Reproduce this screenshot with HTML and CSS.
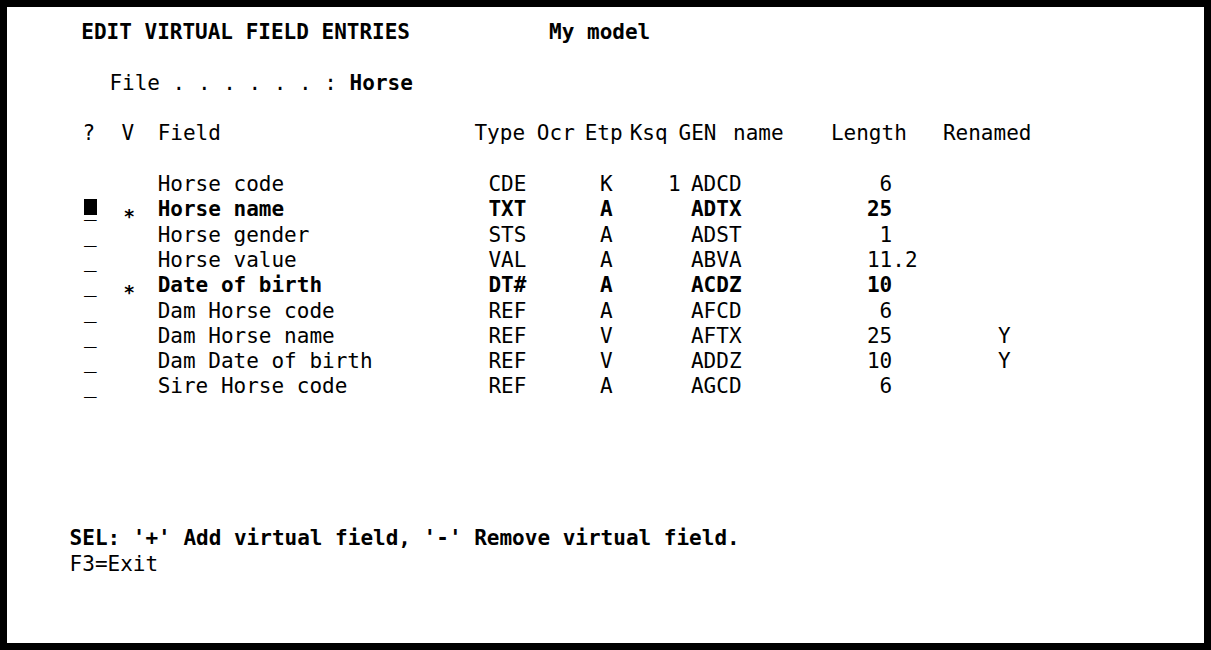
FILE: index.html
```html
<!DOCTYPE html>
<html lang="en">
<head>
<meta charset="utf-8">
<title>Edit virtual field entries</title>
<link rel="stylesheet" href="styles.css">
</head>
<body>
<div class="screen">
  <div class="line title">EDIT VIRTUAL FIELD ENTRIES           My model</div>
  <div class="line file">File . . . . . . : <b class="b">Horse</b></div>
  <div class="hdr">
    <span>?</span><span>V</span><span>Field</span><span>Type</span><span>Ocr</span><span>Etp</span><span>Ksq</span><span>GEN</span><span>name</span><span>Length</span><span>Renamed</span>
  </div>
  <div class="rows">
    <div class="row"><span class="sel"></span><span></span><span>Horse code</span><span>CDE</span><span>K</span><span>1</span><span>ADCD</span><span> 6</span><span></span></div>
    <div class="row bold"><span class="sel"><span class="cur">_</span></span><span><span class="star">*</span></span><span>Horse name</span><span>TXT</span><span>A</span><span></span><span>ADTX</span><span>25</span><span></span></div>
    <div class="row"><span class="sel">_</span><span></span><span>Horse gender</span><span>STS</span><span>A</span><span></span><span>ADST</span><span> 1</span><span></span></div>
    <div class="row"><span class="sel">_</span><span></span><span>Horse value</span><span>VAL</span><span>A</span><span></span><span>ABVA</span><span>11.2</span><span></span></div>
    <div class="row bold"><span class="sel">_</span><span><span class="star">*</span></span><span>Date of birth</span><span>DT#</span><span>A</span><span></span><span>ACDZ</span><span>10</span><span></span></div>
    <div class="row"><span class="sel">_</span><span></span><span>Dam Horse code</span><span>REF</span><span>A</span><span></span><span>AFCD</span><span> 6</span><span></span></div>
    <div class="row"><span class="sel">_</span><span></span><span>Dam Horse name</span><span>REF</span><span>V</span><span></span><span>AFTX</span><span>25</span><span>Y</span></div>
    <div class="row"><span class="sel">_</span><span></span><span>Dam Date of birth</span><span>REF</span><span>V</span><span></span><span>ADDZ</span><span>10</span><span>Y</span></div>
    <div class="row"><span class="sel">_</span><span></span><span>Sire Horse code</span><span>REF</span><span>A</span><span></span><span>AGCD</span><span> 6</span><span></span></div>
  </div>
  <div class="line msg">SEL: '+' Add virtual field, '-' Remove virtual field.</div>
  <div class="line keys">F3=Exit</div>
</div>
</body>
</html>
```

FILE: styles.css
```css
html, body {
  margin: 0;
  padding: 0;
  background: #ffffff;
}

.screen {
  width: 1211px;
  height: 650px;
  box-sizing: border-box;
  border: 7px solid #000000;
  padding: 13.3px 0 0 62.6px;
  background: #ffffff;
  color: #000000;
  font-family: "DejaVu Sans Mono", "Liberation Mono", monospace;
  font-size: 21px;
  line-height: 25.3px;
  overflow: hidden;
}

.line {
  height: 25.3px;
  white-space: pre;
}

.title {
  margin-left: 11.7px;
  font-weight: bold;
}

.file {
  margin-left: 39.8px;
  margin-top: 25.3px;
}

.b {
  font-weight: bold;
}

.hdr {
  display: grid;
  grid-template-columns: 38.9px 36.3px 316.8px 62.4px 47.8px 45px 48.9px 54.5px 97.9px 112px auto;
  height: 25.3px;
  margin-left: 12.9px;
  margin-top: 25.3px;
}

.hdr > span,
.row > span {
  white-space: pre;
}

.rows {
  margin-left: 12.9px;
  margin-top: 25.3px;
}

.row {
  display: grid;
  grid-template-columns: 38.9px 36.3px 330.8px 111.5px 68px 23px 176px 131px auto;
  height: 25.3px;
}

.row.bold {
  font-weight: bold;
}

.row .sel {
  padding-left: 1.5px;
  font-weight: normal;
}

.star {
  display: inline-block;
  font-size: 19px;
  transform: translate(2px, 7px);
}

.cur {
  position: relative;
  display: inline-block;
}

.cur::before {
  content: "";
  position: absolute;
  left: 0;
  top: 2px;
  width: 12.7px;
  height: 15.5px;
  background: #000000;
}

.msg {
  margin-top: 126.5px;
  font-weight: bold;
}
```
